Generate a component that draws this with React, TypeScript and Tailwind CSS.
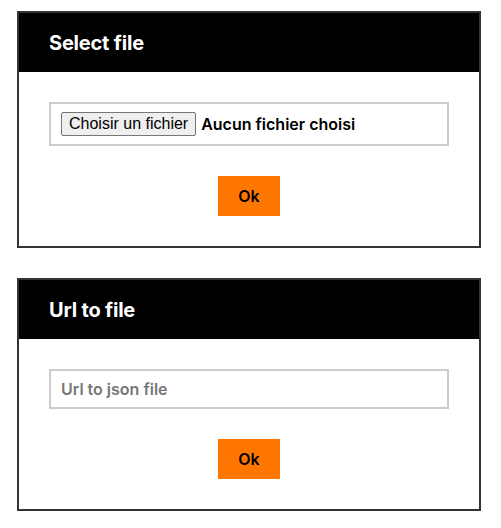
import React from 'react';

const Card: React.FC<{ title: string; children: React.ReactNode }> = ({ title, children }) => (
  <section className="w-[464px] border-2 border-[#333333] bg-white">
    <header className="h-[59px] bg-black pl-[30px] flex items-center">
      <h2 className="text-white text-[20px] font-bold tracking-[-0.2px]">{title}</h2>
    </header>
    <div className="p-[30px] flex flex-col items-center gap-[30px]">
      {children}
      <button className="w-[62px] h-[40px] bg-[#ff7700] text-black text-[16px] font-semibold">Ok</button>
    </div>
  </section>
);

export default function App() {
  return (
    <div className="min-h-[528px] bg-white pt-[11px] pl-[17px] flex flex-col gap-[30px] font-['Inter',_sans-serif]">
      <Card title="Select file">
        <div className="w-full h-[44px] border-2 border-[#cccccc] pl-[10px] flex items-center gap-[5px]">
          <button className="h-[24px] px-[7px] border border-[#767676] rounded-[2px] bg-[#efefef] text-[16px] text-black font-['Liberation_Sans',_sans-serif] leading-none">
            Choisir un fichier
          </button>
          <span className="text-[16px] font-semibold text-black">Aucun fichier choisi</span>
        </div>
      </Card>
      <Card title="Url to file">
        <input
          type="text"
          placeholder="Url to json file"
          className="w-full h-[40px] border-2 border-[#cccccc] px-[10px] text-[16px] font-semibold placeholder:text-[#777777] outline-none"
        />
      </Card>
    </div>
  );
}
